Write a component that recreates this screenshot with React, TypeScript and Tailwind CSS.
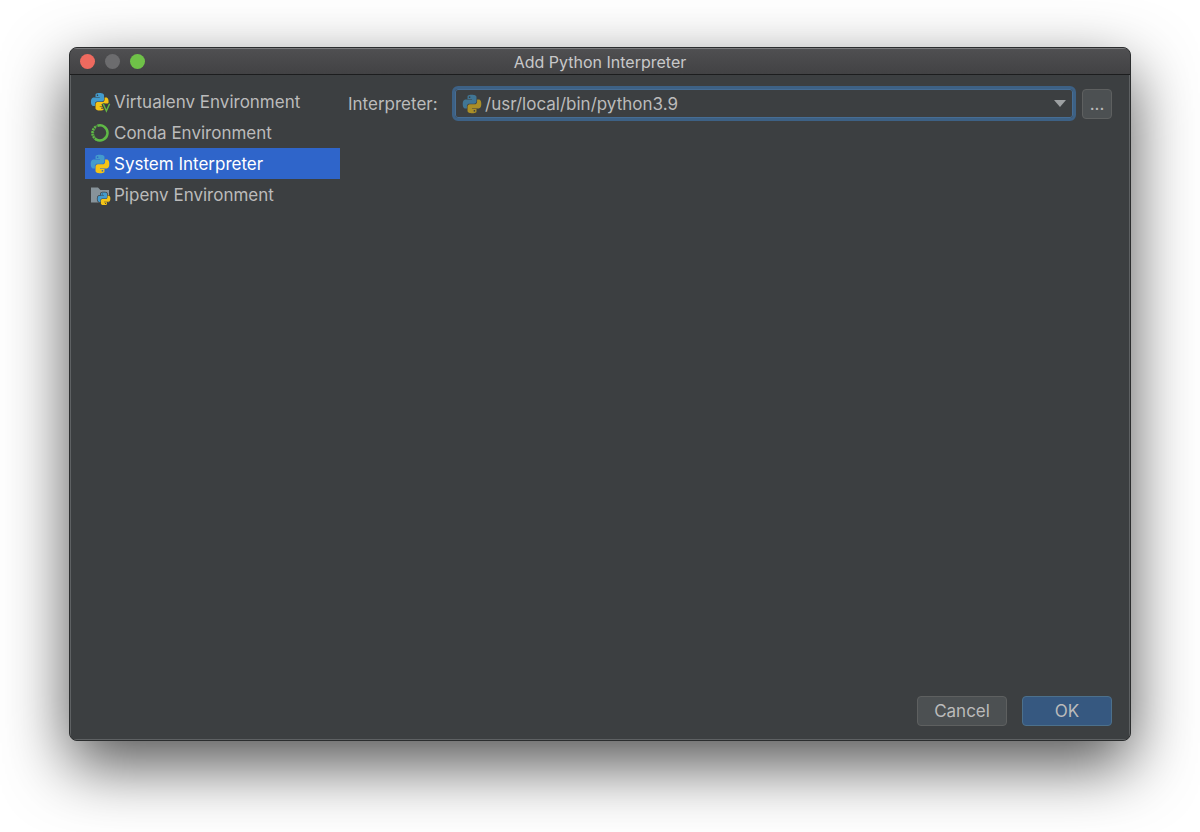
import React, { useState } from 'react';
import { clsx } from 'clsx';

type EnvironmentId = 'virtualenv' | 'conda' | 'system' | 'pipenv';

const SNAKE =
  'M14.25.18l.9.2.73.26.59.3.45.32.34.34.25.34.16.33.1.3.04.26.02.2-.01.13V8.5l-.05.63-.13.55-.21.46-.26.38-.3.31-.33.25-.35.19-.35.14-.33.1-.3.07-.26.04-.21.02H8.77l-.69.05-.59.14-.5.22-.41.27-.33.32-.27.35-.2.36-.15.37-.1.35-.07.32-.04.27-.02.21v3.06H3.17l-.21-.03-.28-.07-.32-.12-.35-.18-.36-.26-.36-.36-.35-.46-.32-.59-.28-.73-.21-.88-.14-1.05-.05-1.23.06-1.22.16-1.04.24-.87.32-.71.36-.57.4-.44.42-.33.42-.24.4-.16.36-.1.32-.05.24-.01h.16l.06.01h8.16v-.83H6.18l-.01-2.75-.02-.37.05-.34.11-.31.17-.28.25-.26.31-.23.38-.2.44-.18.51-.15.58-.12.64-.1.71-.06.77-.04.84-.02 1.27.05zm-6.1 2.2l-.23.33-.08.41.08.41.23.34.33.22.41.09.41-.09.33-.22.23-.34.08-.41-.08-.41-.23-.33-.33-.22-.41-.09-.41.09z';

// The logo is one snake drawn twice, the second turned by half a circle
const Snakes: React.FC = () => (
  <>
    <path d={SNAKE} fill="#439bcd" />
    <path d={SNAKE} fill="#f4c416" transform="rotate(180 12 12)" />
  </>
);

const PythonIcon: React.FC<{ className?: string }> = ({ className }) => (
  <svg viewBox="-1 -1 26 26" className={clsx('size-5 shrink-0', className)} aria-hidden="true">
    <Snakes />
  </svg>
);

const VirtualenvIcon: React.FC = () => (
  <svg viewBox="0 0 20 20" className="size-5 shrink-0 overflow-visible" aria-hidden="true">
    <g transform="translate(1 1) scale(0.73)">
      <Snakes />
    </g>
    <path d="M12.8 11.6L16.2 19.6L19.6 11.6" fill="#3c3f41" stroke="#3c3f41" strokeWidth="3" />
    <path d="M13.2 11.8L16.4 19L19.6 11.8" fill="none" stroke="#62b543" strokeWidth="1.5" />
  </svg>
);

const CondaIcon: React.FC = () => (
  <svg viewBox="0 0 20 20" className="size-5 shrink-0" fill="none" stroke="#5fb946" aria-hidden="true">
    <path d="M7.4 2.7A7.6 7.6 0 1 1 6 16.4" strokeWidth="2.5" />
    <path d="M6.4 16.6A7.6 7.6 0 0 1 6.8 3" strokeWidth="2.4" strokeDasharray="2 0.7" />
    <path d="M5.6 14.4A6 6 0 0 1 5.8 5.4" strokeWidth="0.9" strokeDasharray="1.2 1.1" />
  </svg>
);

const PipenvIcon: React.FC = () => (
  <svg viewBox="0 0 20 20" className="size-5 shrink-0 overflow-visible" aria-hidden="true">
    <path d="M1 2.5h7l2.4 2.5H19V17.5H1z" fill="#87939a" />
    <g transform="translate(7.6 7.4) scale(0.53)">
      <g fill="#3c3f41" stroke="#3c3f41" strokeWidth="2.6">
        <path d={SNAKE} />
        <path d={SNAKE} transform="rotate(180 12 12)" />
      </g>
      <Snakes />
    </g>
  </svg>
);

const environments: { id: EnvironmentId; label: string; icon: React.ReactNode }[] = [
  { id: 'virtualenv', label: 'Virtualenv Environment', icon: <VirtualenvIcon /> },
  { id: 'conda', label: 'Conda Environment', icon: <CondaIcon /> },
  { id: 'system', label: 'System Interpreter', icon: <PythonIcon /> },
  { id: 'pipenv', label: 'Pipenv Environment', icon: <PipenvIcon /> },
];

const TitleBar: React.FC = () => (
  <header className="grid h-[27px] shrink-0 grid-cols-[1fr_auto_1fr] items-center border-t border-b border-t-[#7b7b7d] border-b-[#1c1d1e] bg-linear-to-b from-[#4f4f51] to-[#424244] px-2.5">
    <div className="flex gap-2.5">
      <button aria-label="Close" className="size-[15px] rounded-full bg-[#ee6a5f]" />
      <button aria-label="Minimize" className="size-[15px] rounded-full bg-[#6c6c6e]" />
      <button aria-label="Zoom" className="size-[15px] rounded-full bg-[#6fc148]" />
    </div>
    <h1 className="text-base leading-6 text-[#c8c8c9]">Add Python Interpreter</h1>
  </header>
);

export default function App() {
  const [selected, setSelected] = useState<EnvironmentId>('system');
  const [interpreter, setInterpreter] = useState('/usr/local/bin/python3.9');

  return (
    <div className="flex min-h-screen flex-col bg-white px-[69px] pt-[47px] pb-[91px] font-['Inter','Liberation_Sans',sans-serif] text-[17px] leading-6 text-[#bbbbbb]">
      <main className="flex flex-1 flex-col overflow-hidden rounded-lg border border-[#2b2d2e] bg-[#3c3f41] shadow-[0_24px_64px_rgba(0,0,0,0.68)]">
        <TitleBar />

        <div className="flex flex-1 flex-col border border-t-0 border-[#5e6163] pr-[17px] pl-3.5">
          <div className="flex flex-1 gap-2 pt-[11px]">
            {/* Environment types */}
            <nav className="w-[255px] shrink-0">
              {environments.map(env => (
                <button
                  key={env.id}
                  onClick={() => setSelected(env.id)}
                  aria-current={env.id === selected}
                  className={clsx(
                    'flex h-[31px] w-full items-center gap-1 px-[5px] text-left whitespace-nowrap',
                    env.id === selected && 'bg-[#2f65ca] text-white'
                  )}
                >
                  {env.icon}
                  {env.label}
                </button>
              ))}
            </nav>

            {/* Interpreter path */}
            <div className="flex h-[35px] flex-1 items-center">
              <label htmlFor="interpreter" className="w-[104px] shrink-0">
                Interpreter:
              </label>
              <div className="relative min-w-0 flex-1">
                <PythonIcon className="pointer-events-none absolute top-2 left-2.5 opacity-60" />
                <select
                  id="interpreter"
                  value={interpreter}
                  onChange={e => setInterpreter(e.target.value)}
                  className="block h-[35px] w-full appearance-none rounded-md border-3 border-[#3d6185] bg-[#3c3f41] pr-8 pl-[30px] outline-1 -outline-offset-4 outline-[#466d94]"
                >
                  <option>/usr/local/bin/python3.9</option>
                  <option>/usr/bin/python3</option>
                </select>
                <svg viewBox="0 0 12 7" className="pointer-events-none absolute top-3.5 right-2.5 h-[7px] w-3" aria-hidden="true">
                  <path d="M0 0h12L6 7z" fill="#9da0a2" />
                </svg>
              </div>
              <button
                aria-label="Browse"
                className="ml-1.5 h-[30px] w-[30px] shrink-0 rounded border border-[#5e6060] bg-[#4c5052]"
              >
                ...
              </button>
            </div>
          </div>

          <footer className="flex justify-end gap-[15px] pb-[13px]">
            <button className="h-[30px] w-[90px] rounded border border-[#5e6060] bg-[#4c5052]">Cancel</button>
            <button className="h-[30px] w-[90px] rounded border border-[#4c708c] bg-[#365880]">OK</button>
          </footer>
        </div>
      </main>
    </div>
  );
}
